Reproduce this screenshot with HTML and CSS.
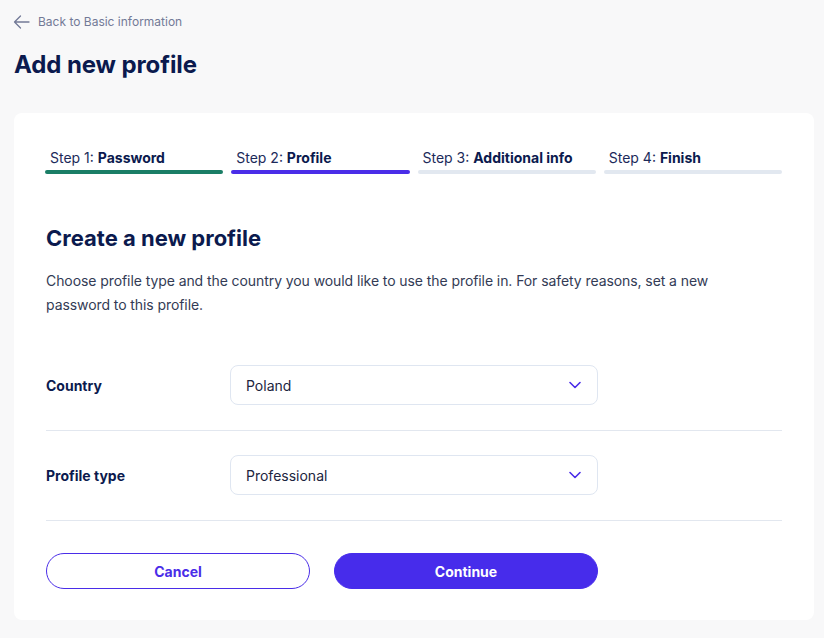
FILE: index.html
```html
<!DOCTYPE html>
<html lang="en">
<head>
<meta charset="utf-8">
<title>Add new profile</title>
<link rel="stylesheet" href="styles.css">
</head>
<body>
<div class="page">
  <a class="back" href="#">
    <svg class="back-icon" width="17" height="14" viewBox="0 0 17 14" fill="none" stroke="currentColor" stroke-width="1.3" stroke-linecap="round" stroke-linejoin="round"><path d="M16 7H1.5M7.5 1L1.5 7l6 6"/></svg>
    <span>Back to Basic information</span>
  </a>
  <h1 class="title">Add new profile</h1>
  <div class="card">
    <div class="steps">
      <div class="step step-done"><span class="step-label">Step 1: <b>Password</b></span><span class="bar"></span></div>
      <div class="step step-active"><span class="step-label">Step 2: <b>Profile</b></span><span class="bar"></span></div>
      <div class="step"><span class="step-label">Step 3: <b>Additional info</b></span><span class="bar"></span></div>
      <div class="step"><span class="step-label">Step 4: <b>Finish</b></span><span class="bar"></span></div>
    </div>
    <h2 class="heading">Create a new profile</h2>
    <p class="desc">Choose profile type and the country you would like to use the profile in. For safety reasons, set a new password to this profile.</p>
    <div class="rows">
      <div class="row">
        <div class="label">Country</div>
        <div class="select"><span>Poland</span>
          <svg class="chev" width="12" height="8" viewBox="0 0 12 8" fill="none" stroke="currentColor" stroke-width="1.6" stroke-linecap="round" stroke-linejoin="round"><path d="M1 1.5l5 5 5-5"/></svg>
        </div>
      </div>
      <div class="row">
        <div class="label">Profile type</div>
        <div class="select"><span>Professional</span>
          <svg class="chev" width="12" height="8" viewBox="0 0 12 8" fill="none" stroke="currentColor" stroke-width="1.6" stroke-linecap="round" stroke-linejoin="round"><path d="M1 1.5l5 5 5-5"/></svg>
        </div>
      </div>
    </div>
    <div class="actions">
      <button class="btn btn-outline">Cancel</button>
      <button class="btn btn-primary">Continue</button>
    </div>
  </div>
</div>
</body>
</html>
```
FILE: styles.css
```css
* { box-sizing: border-box; }
html, body { margin: 0; padding: 0; }
body {
  background: #f8f8f9;
  font-family: Inter, "Noto Sans", sans-serif;
  color: #0c1d4f;
}
.page { padding: 13px 10px 0 14px; }
.back {
  display: flex;
  align-items: center;
  gap: 8px;
  color: #737a97;
  text-decoration: none;
  font-size: 12px;
  line-height: 18px;
  margin-left: -1px;
}
.back-icon { display: block; }
.title {
  margin: 19px 0 0;
  font-size: 24px;
  line-height: 30px;
  font-weight: 700;
  color: #0b1a4e;
  letter-spacing: -0.1px;
}
.card {
  margin-top: 33px;
  background: #fff;
  border-radius: 8px;
  padding: 35px 32px 31px 32px;
  width: 800px;
}
.steps {
  display: grid;
  grid-template-columns: repeat(4, 1fr);
  gap: 8px;
  margin-left: -1px;
}
.step { display: flex; flex-direction: column; }
.step-label {
  font-size: 14px;
  line-height: 20px;
  padding-left: 5px;
  color: #1c2a5a;
}
.step-label b { font-weight: 700; color: #0b1a4e; }
.bar {
  display: block;
  height: 4px;
  border-radius: 2px;
  margin-top: 2px;
  background: #e2e8f0;
}
.step-done .bar { background: #1a7e66; }
.step-active .bar { background: #4a2de8; }
.heading {
  margin: 50px 0 0;
  font-size: 22px;
  line-height: 28px;
  font-weight: 700;
  color: #0b1a4e;
}
.desc {
  margin: 17px 0 0;
  font-size: 14px;
  line-height: 24px;
  color: #333b55;
  letter-spacing: -0.08px;
  max-width: 720px;
}
.rows { margin-top: 24px; }
.row {
  display: grid;
  grid-template-columns: 184px 368px;
  align-items: center;
  padding: 24px 0 25px;
  border-bottom: 1px solid #e2e7ef;
}
.label {
  font-size: 14px;
  font-weight: 700;
  color: #0b1a4e;
}
.select {
  height: 40px;
  border: 1px solid #dfe6f1;
  border-radius: 8px;
  display: flex;
  align-items: center;
  justify-content: space-between;
  padding: 0 16px 0 15px;
  font-size: 14px;
  color: #1c2540;
}
.chev { color: #4a2de8; display: block; }
.actions {
  display: grid;
  grid-template-columns: 264px 264px;
  gap: 24px;
  margin-top: 32px;
}
.btn {
  height: 36px;
  border-radius: 18px;
  font-family: Inter, "Noto Sans", sans-serif;
  font-size: 14px;
  font-weight: 700;
  cursor: pointer;
}
.btn-outline {
  background: #fff;
  border: 1px solid #4a2de8;
  color: #4a2de8;
}
.btn-primary {
  background: #472ceb;
  border: 1px solid #472ceb;
  color: #fff;
}
```
